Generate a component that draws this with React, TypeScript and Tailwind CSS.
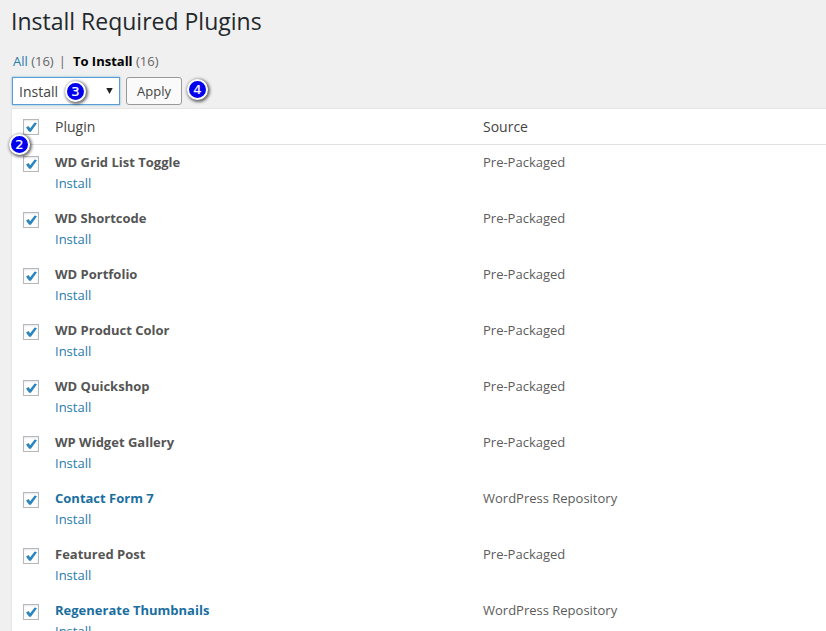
import React from "react";

const plugins: { name: string; source: string; link?: boolean }[] = [
  { name: "WD Grid List Toggle", source: "Pre-Packaged" },
  { name: "WD Shortcode", source: "Pre-Packaged" },
  { name: "WD Portfolio", source: "Pre-Packaged" },
  { name: "WD Product Color", source: "Pre-Packaged" },
  { name: "WD Quickshop", source: "Pre-Packaged" },
  { name: "WP Widget Gallery", source: "Pre-Packaged" },
  { name: "Contact Form 7", source: "WordPress Repository", link: true },
  { name: "Featured Post", source: "Pre-Packaged" },
  { name: "Regenerate Thumbnails", source: "WordPress Repository", link: true },
];

function Check() {
  return (
    <span className="flex h-4 w-4 shrink-0 items-center justify-center border border-[#b4b9be] bg-white shadow-[inset_0_1px_2px_rgba(0,0,0,0.1)]">
      <svg width="14" height="14" viewBox="0 0 14 14" className="block">
        <path d="M2 7.4L4.5 6L6.2 8.3L10.6 2.4L13 3.2L6.9 11.8H5.1Z" fill="#2a86bb" />
      </svg>
    </span>
  );
}

function Marker({ n, className }: { n: string; className: string }) {
  return (
    <span className={`absolute z-10 flex h-[21px] w-[21px] items-center justify-center rounded-full border-2 border-white bg-[#0000ee] font-['DejaVu_Sans',sans-serif] text-[13px] leading-none text-white shadow-[1px_1px_3px_1px_rgba(0,0,0,0.55)] [-webkit-text-stroke:0.2px_white] ${className}`}>
      {n}
    </span>
  );
}

export default function App() {
  return (
    <div className="relative h-[631px] w-[826px] overflow-hidden bg-[#f0f0f0] pl-[11px] font-['Open_Sans',sans-serif] text-[13px] text-[#5c5c5c]">
      <h1 className="h-[51px] pt-[7px] text-[23px] leading-[29px] font-normal text-[#23282d]">Install Required Plugins</h1>
      <div className="flex h-[26px] pl-[2px] leading-5 text-[#666]">
        <span><span className="text-[#2a7cab]">All</span> (16)</span>
        <span className="mr-[7px] ml-[5px]">|</span>
        <span><b className="font-bold text-black">To Install</b> (16)</span>
      </div>
      <div className="flex h-[31px] gap-[6px] pl-px">
        <div className="flex h-[28px] w-[108px] items-center justify-between border border-[#5b9dd9] bg-white pr-[6px] pl-[6px] text-[14px] text-[#444] shadow-[0_0_2px_rgba(30,140,190,0.6)]">
          <span>Install</span>
          <svg width="7" height="6" viewBox="0 0 7 6"><path d="M0.3 0H6.7L3.5 6Z" fill="#222" /></svg>
        </div>
        <div className="flex h-[28px] w-[56px] items-center justify-center rounded-[3px] border border-[#999] bg-[#fafafa] pt-px text-[13px] text-[#444]">Apply</div>
      </div>
      <div className="h-[523px] border-t border-l border-[#e5e5e5] bg-white">
        <div className="flex h-[36px] items-center border-b border-[#e1e1e1] pl-[11px] text-[14px] text-[#444]">
          <Check />
          <span className="ml-4 w-[428px]">Plugin</span>
          <span>Source</span>
        </div>
        {plugins.map((p) => (
          <div key={p.name} className="flex h-[56px] pt-[7px] pl-[11px] leading-5">
            <div className="pt-[4px]"><Check /></div>
            <div className="ml-4 w-[428px]">
              <div className={p.link ? "font-bold text-[#1a6fa0]" : "font-bold text-[#555]"}>{p.name}</div>
              <div className="mt-px text-[#2a7cab]">Install</div>
            </div>
            <div>{p.source}</div>
          </div>
        ))}
      </div>
      <Marker n="2" className="top-[134px] left-[9px]" />
      <Marker n="3" className="top-[81px] left-[65px]" />
      <Marker n="4" className="top-[79px] left-[187px]" />
    </div>
  );
}
